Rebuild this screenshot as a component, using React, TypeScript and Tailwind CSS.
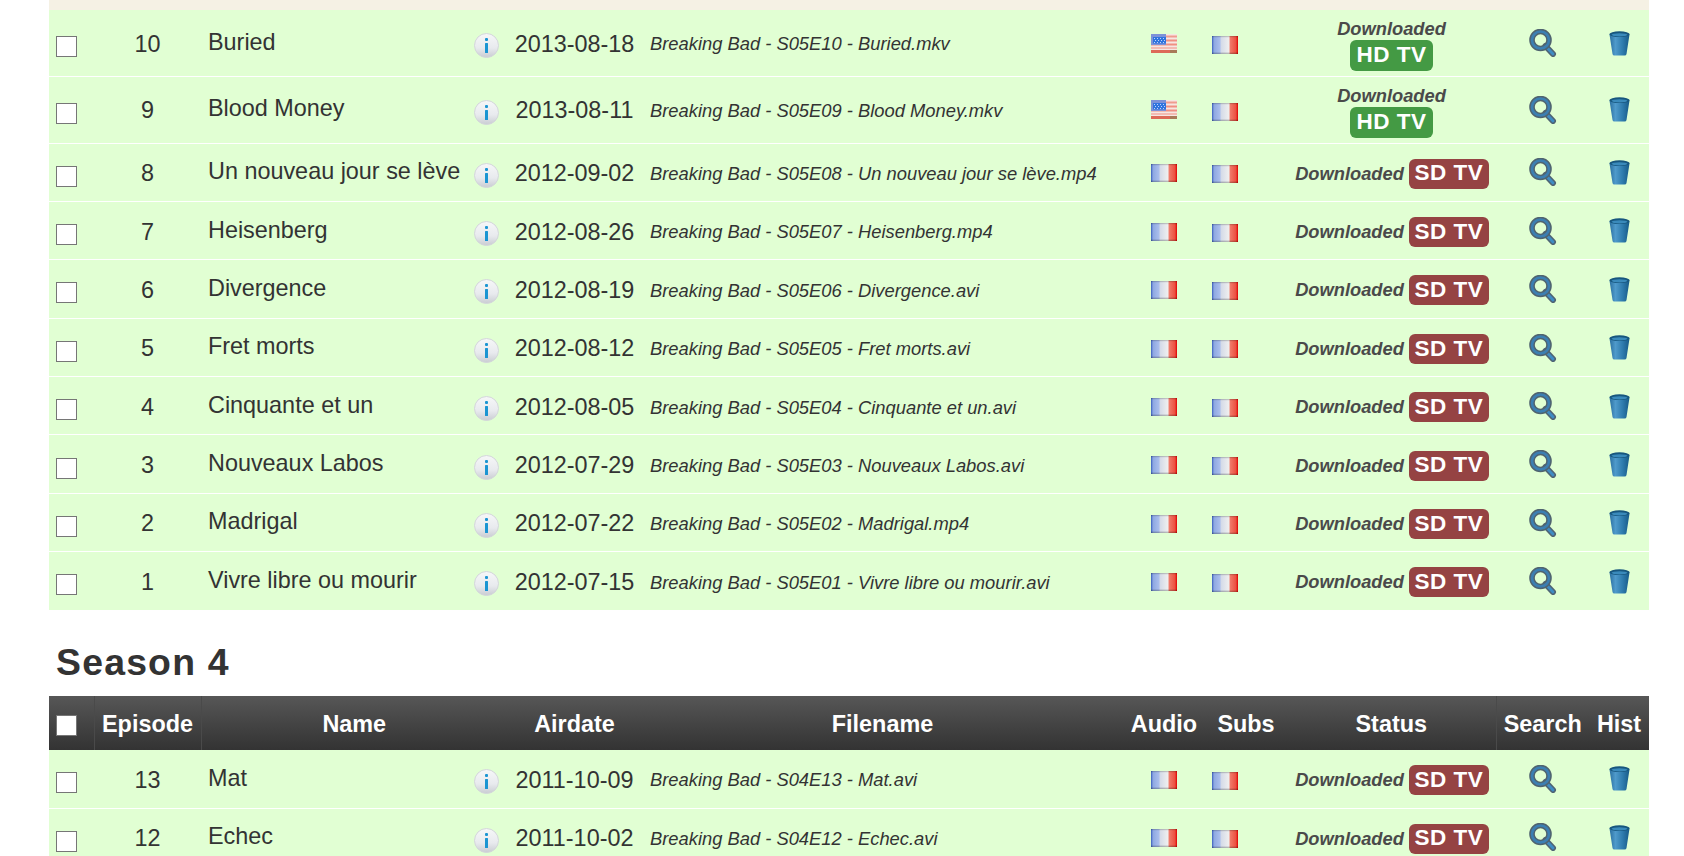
import { useId } from "react";

interface Episode {
  num: number;
  name: string;
  airdate: string;
  file: string;
  audio: "us" | "fr";
  quality: "HD TV" | "SD TV";
  h: string;
}

const season5: Episode[] = [
  { num: 10, name: "Buried", airdate: "2013-08-18", file: "Breaking Bad - S05E10 - Buried.mkv", audio: "us", quality: "HD TV", h: "h-[66px]" },
  { num: 9, name: "Blood Money", airdate: "2013-08-11", file: "Breaking Bad - S05E09 - Blood Money.mkv", audio: "us", quality: "HD TV", h: "h-[67px]" },
  { num: 8, name: "Un nouveau jour se lève", airdate: "2012-09-02", file: "Breaking Bad - S05E08 - Un nouveau jour se lève.mp4", audio: "fr", quality: "SD TV", h: "h-[58.4px]" },
  { num: 7, name: "Heisenberg", airdate: "2012-08-26", file: "Breaking Bad - S05E07 - Heisenberg.mp4", audio: "fr", quality: "SD TV", h: "h-[58.4px]" },
  { num: 6, name: "Divergence", airdate: "2012-08-19", file: "Breaking Bad - S05E06 - Divergence.avi", audio: "fr", quality: "SD TV", h: "h-[58.4px]" },
  { num: 5, name: "Fret morts", airdate: "2012-08-12", file: "Breaking Bad - S05E05 - Fret morts.avi", audio: "fr", quality: "SD TV", h: "h-[58.4px]" },
  { num: 4, name: "Cinquante et un", airdate: "2012-08-05", file: "Breaking Bad - S05E04 - Cinquante et un.avi", audio: "fr", quality: "SD TV", h: "h-[58.4px]" },
  { num: 3, name: "Nouveaux Labos", airdate: "2012-07-29", file: "Breaking Bad - S05E03 - Nouveaux Labos.avi", audio: "fr", quality: "SD TV", h: "h-[58.4px]" },
  { num: 2, name: "Madrigal", airdate: "2012-07-22", file: "Breaking Bad - S05E02 - Madrigal.mp4", audio: "fr", quality: "SD TV", h: "h-[58.4px]" },
  { num: 1, name: "Vivre libre ou mourir", airdate: "2012-07-15", file: "Breaking Bad - S05E01 - Vivre libre ou mourir.avi", audio: "fr", quality: "SD TV", h: "h-[58.4px]" },
];

const season4: Episode[] = [
  { num: 13, name: "Mat", airdate: "2011-10-09", file: "Breaking Bad - S04E13 - Mat.avi", audio: "fr", quality: "SD TV", h: "h-[58.4px]" },
  { num: 12, name: "Echec", airdate: "2011-10-02", file: "Breaking Bad - S04E12 - Echec.avi", audio: "fr", quality: "SD TV", h: "h-[58.4px]" },
];

function FrFlag({ className }: { className?: string }) {
  const id = useId();
  return (
    <svg width="26" height="18" viewBox="0 0 26 18" className={className}>
      <defs>
        <linearGradient id={id} x1="0" y1="0" x2="1" y2="0">
          <stop offset="0" stopColor="#3a5fbd" />
          <stop offset="0.08" stopColor="#8ea8e2" />
          <stop offset="0.3" stopColor="#a9bdec" />
          <stop offset="0.36" stopColor="#d5dbe8" />
          <stop offset="0.65" stopColor="#efefef" />
          <stop offset="0.7" stopColor="#f07a6a" />
          <stop offset="0.92" stopColor="#ec5040" />
          <stop offset="1" stopColor="#e00000" />
        </linearGradient>
      </defs>
      <rect width="26" height="18" fill={`url(#${id})`} />
      <rect width="26" height="1.2" fill="#000" opacity="0.18" />
      <rect y="16.6" width="26" height="1.4" fill="#000" opacity="0.22" />
    </svg>
  );
}

function UsFlag({ className }: { className?: string }) {
  return (
    <svg width="26" height="19" viewBox="0 0 26 19" className={className}>
      <rect width="26" height="19" fill="#f6e6e2" />
      <rect y="1.5" width="26" height="2" fill="#ef9c90" />
      <rect y="5.5" width="26" height="2" fill="#ef8f82" />
      <rect y="9.5" width="26" height="2" fill="#ef8f82" />
      <rect y="13.5" width="26" height="1" fill="#ef8f82" />
      <rect y="16" width="26" height="3" fill="#dd6a58" />
      <rect x="19" y="16" width="7" height="3" fill="#a87a58" />
      <rect width="15" height="11" fill="#7d92d8" />
      <rect x="2" y="3" width="13" height="6.5" fill="#2f74de" />
      <path d="M3 4.5h1M6 4.5h1M9 4.5h1M12 4.5h1M4 6.5h1M7 6.5h1M10 6.5h1M13 6.5h1M3 8.5h1M6 8.5h1M9 8.5h1M12 8.5h1" stroke="#bcd2fb" strokeWidth="1" />
    </svg>
  );
}

function InfoIcon() {
  const id = useId();
  return (
    <svg width="25" height="25" viewBox="0 0 25 25" className="shrink-0 mt-[6px]">
      <defs>
        <linearGradient id={id} x1="0" y1="0" x2="0" y2="1">
          <stop offset="0" stopColor="#f6f7f8" />
          <stop offset="0.6" stopColor="#e8eaee" />
          <stop offset="1" stopColor="#c9ccd2" />
        </linearGradient>
      </defs>
      <circle cx="12.5" cy="12.5" r="12" fill={`url(#${id})`} stroke="#d3d6da" strokeWidth="1" />
      <rect x="11" y="5" width="3" height="3" rx="1" fill="#1b95d2" />
      <rect x="11" y="10" width="3" height="10" rx="0.5" fill="#1b95d2" />
    </svg>
  );
}

function SearchIcon() {
  return (
    <svg width="28" height="28" viewBox="0 0 28 28" className="inline-block -mt-[2px]">
      <path d="M16.5 17l7.5 8" stroke="#4f6474" strokeWidth="6" strokeLinecap="round" />
      <path d="M16.5 17l7.5 8" stroke="#3f8cc4" strokeWidth="2.8" strokeLinecap="round" />
      <circle cx="11.5" cy="11" r="8.5" fill="none" stroke="#50646f" strokeWidth="5.6" />
      <circle cx="11.5" cy="11" r="8.5" fill="none" stroke="#3c7fb2" strokeWidth="2.6" />
    </svg>
  );
}

function TrashIcon() {
  const id = useId();
  return (
    <svg width="21" height="25" viewBox="0 0 21 25" className="inline-block -mt-[2px]">
      <defs>
        <linearGradient id={id} x1="0" y1="0" x2="1" y2="0">
          <stop offset="0" stopColor="#2a6f9f" />
          <stop offset="0.3" stopColor="#4f9acb" />
          <stop offset="0.65" stopColor="#2f7cae" />
          <stop offset="1" stopColor="#175a88" />
        </linearGradient>
      </defs>
      <path d="M0.5 3.5L3.5 23q.2 1.5 2 1.5h10q1.8 0 2-1.5L20.5 3.5z" fill={`url(#${id})`} />
      <ellipse cx="10.5" cy="3.2" rx="10.2" ry="2.9" fill="#17567e" />
      <ellipse cx="10.5" cy="3.8" rx="8" ry="1.6" fill="#3a8abb" />
    </svg>
  );
}

function Checkbox({ header }: { header?: boolean }) {
  return (
    <input
      type="checkbox"
      readOnly
      className={
        "appearance-none block w-[21px] h-[21px] bg-white border border-[#767676] ml-[7px] " +
        (header ? "mt-[5px]" : "mt-[8px]")
      }
    />
  );
}

function EpisodeRow({ ep }: { ep: Episode }) {
  const hd = ep.quality === "HD TV";
  return (
    <tr className="bg-[#e1ffd3] text-[#333333]">
      <td className={"p-0 border-b border-white " + ep.h}>
        <Checkbox />
      </td>
      <td className="p-0 pt-[3px] border-b border-white text-center">{ep.num}</td>
      <td className="p-0 border-b border-white pl-[7px] pr-[8px]">
        <div className="flex items-center justify-between whitespace-nowrap">
          <span className="-mt-[1px]">{ep.name}</span>
          <InfoIcon />
        </div>
      </td>
      <td className="p-0 pt-[3px] border-b border-white text-center">{ep.airdate}</td>
      <td className="p-0 pt-[3px] pl-[8px] border-b border-white text-[18.35px] italic whitespace-nowrap">{ep.file}</td>
      <td className="p-0 border-b border-white text-center">
        {ep.audio === "us" ? <UsFlag className="inline-block -mt-[2px]" /> : <FrFlag className="inline-block" />}
      </td>
      <td className="p-0 pl-[7px] border-b border-white">
        <FrFlag className="block mt-[4px]" />
      </td>
      <td className="p-0 border-b border-white text-center">
        <div className={hd ? "flex flex-col items-center pt-[3px]" : "flex items-center justify-center gap-[5px] pt-[3px] pl-[1px]"}>
          <span className="text-[18.3px] font-bold italic text-[#4a4a4a] leading-[22px]">Downloaded</span>
          <span
            className={
              "rounded-[6px] text-white font-bold text-[22.5px] tracking-[0.5px] leading-none flex items-center justify-center " +
              (hd ? "bg-[#449a44] w-[83px] h-[31px]" : "bg-[#954343] w-[80px] h-[30px]")
            }
          >
            {ep.quality}
          </span>
        </div>
      </td>
      <td className="p-0 border-b border-white text-center">
        <SearchIcon />
      </td>
      <td className="p-0 border-b border-white text-center">
        <TrashIcon />
      </td>
    </tr>
  );
}

function SeasonHead() {
  const th = "p-0 pt-[3px] font-bold text-center text-white whitespace-nowrap";
  return (
    <thead>
      <tr className="bg-gradient-to-b from-[#575757] to-[#333333] h-[54px]">
        <th className="p-0 border-r border-[#4a4a4a]">
          <Checkbox header />
        </th>
        <th className={th + " border-r border-[#4a4a4a]"}>Episode</th>
        <th className={th}>Name</th>
        <th className={th}>Airdate</th>
        <th className={th}>Filename</th>
        <th className={th}>Audio</th>
        <th className={th}>Subs</th>
        <th className={th + " border-r border-[#4a4a4a]"}>Status</th>
        <th className={th}>Search</th>
        <th className={th}>Hist</th>
      </tr>
    </thead>
  );
}

function SeasonTable({ episodes, head }: { episodes: Episode[]; head?: boolean }) {
  return (
    <table className="table-fixed border-collapse w-[1600px] ml-[49px] text-[23.4px]">
      <colgroup>
        <col className="w-[45px]" />
        <col className="w-[107px]" />
        <col className="w-[306px]" />
        <col className="w-[135px]" />
        <col className="w-[481px]" />
        <col className="w-[82px]" />
        <col className="w-[82px]" />
        <col className="w-[209px]" />
        <col className="w-[93px]" />
        <col className="w-[60px]" />
      </colgroup>
      {head && <SeasonHead />}
      <tbody>
        {episodes.map((ep) => (
          <EpisodeRow key={ep.file} ep={ep} />
        ))}
      </tbody>
    </table>
  );
}

export default function App() {
  return (
    <div className="h-[856px] overflow-hidden bg-white font-['Liberation_Sans',Arial,sans-serif]">
      <div className="h-[10px] ml-[49px] w-[1600px] bg-[#f5f1e4]" />
      <SeasonTable episodes={season5} />
      <h2 className="ml-[56px] mt-[30px] mb-[12px] text-[37.4px] leading-[43px] font-bold tracking-[1.2px] text-[#333333]">
        Season 4
      </h2>
      <SeasonTable episodes={season4} head />
    </div>
  );
}
